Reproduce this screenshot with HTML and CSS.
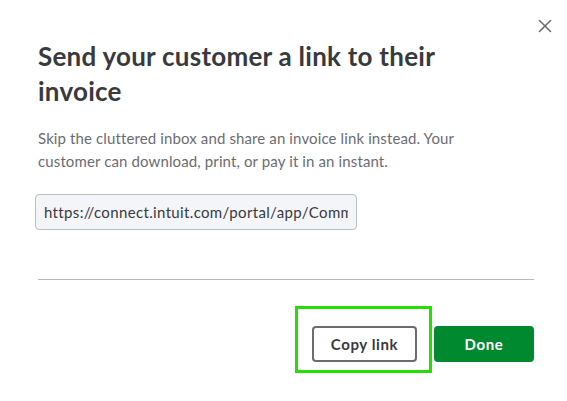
FILE: index.html
```html
<!DOCTYPE html>
<html>
<head>
<meta charset="utf-8">
<link rel="stylesheet" href="styles.css">
</head>
<body>
<div class="modal">
  <div class="topbar">
    <button class="close" aria-label="Close">
      <svg width="14" height="14" viewBox="0 0 14 14"><path d="M1.5 1.5 L12.5 12.5 M12.5 1.5 L1.5 12.5" stroke="#6b6c72" stroke-width="1.6" stroke-linecap="round" fill="none"/></svg>
    </button>
  </div>
  <h1 class="title">Send your customer a link to their invoice</h1>
  <p class="desc">Skip the cluttered inbox and share an invoice link instead. Your customer can download, print, or pay it in an instant.</p>
  <input class="link-field" type="text" readonly value="https://connect.intuit.com/portal/app/CommerceNetwork/view/scs-v1-0a1b2c3d4e5f">
  <hr class="divider">
  <div class="actions">
    <div class="highlight-wrap">
      <button class="btn btn-secondary">Copy link</button>
      <div class="highlight"></div>
    </div>
    <button class="btn btn-primary">Done</button>
  </div>
</div>
</body>
</html>
```
FILE: styles.css
```css
html, body {
  margin: 0;
  padding: 0;
  background: #ffffff;
}
body {
  font-family: "Lato", "Open Sans", sans-serif;
  color: #393a3d;
}
.modal {
  width: 567px;
  height: 401px;
  box-sizing: border-box;
  padding: 0 33px 0 38px;
  display: flex;
  flex-direction: column;
}
.topbar {
  display: flex;
  justify-content: flex-end;
  padding-top: 19px;
  margin-right: -18px;
  height: 14px;
}
.close {
  border: 0;
  background: none;
  padding: 0;
  width: 14px;
  height: 14px;
  cursor: pointer;
  display: block;
}
.close svg { display: block; }
.title {
  margin: 6px 0 0 0;
  font-size: 26px;
  line-height: 35px;
  font-weight: 700;
  letter-spacing: 0.25px;
  color: #393a3d;
  width: 440px;
}
.desc {
  margin: 18px 0 0 0;
  font-size: 15px;
  line-height: 23px;
  letter-spacing: 0.12px;
  color: #6b6c72;
  width: 460px;
}
.link-field {
  display: block;
  margin: 21px 0 0 -3px;
  width: 322px;
  height: 36px;
  box-sizing: border-box;
  border: 1px solid #babec5;
  border-radius: 4px;
  background: #f4f5f8;
  padding: 0 8px;
  font-family: inherit;
  font-size: 15px;
  letter-spacing: 0.35px;
  color: #393a3d;
  outline: none;
}
.divider {
  margin: 49px 0 0 0;
  border: 0;
  border-top: 1px solid #bababa;
  height: 0;
}
.actions {
  display: flex;
  justify-content: flex-end;
  gap: 17px;
  margin-top: 46px;
}
.highlight-wrap {
  position: relative;
}
.btn {
  height: 36px;
  box-sizing: border-box;
  border-radius: 4px;
  font-family: inherit;
  font-size: 15px;
  font-weight: 700;
  letter-spacing: 0.6px;
  cursor: pointer;
  padding: 0;
  display: block;
}
.btn-secondary {
  width: 105px;
  border: 2px solid #6b6c72;
  background: #ffffff;
  color: #393a3d;
}
.btn-primary {
  width: 100px;
  border: 0;
  background: #00892e;
  color: #ffffff;
}
.highlight {
  position: absolute;
  left: -17px;
  top: -20px;
  width: 137px;
  height: 67px;
  box-sizing: border-box;
  border: 3px solid #22e000;
  pointer-events: none;
}
```
